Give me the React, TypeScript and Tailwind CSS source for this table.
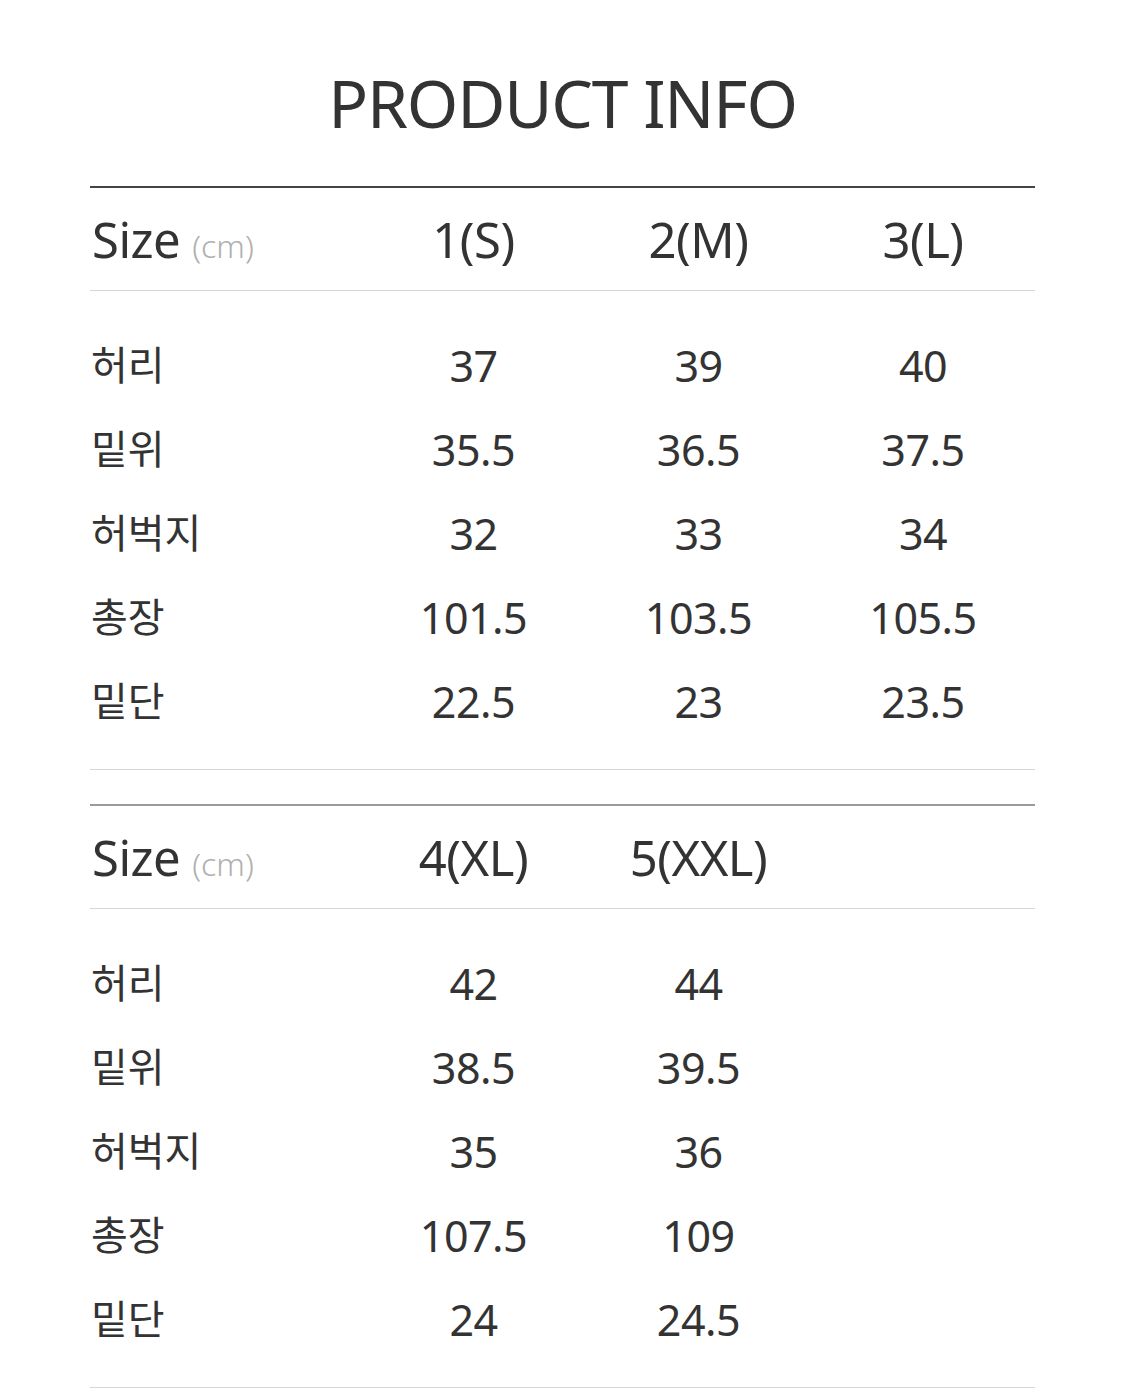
const font = { fontFamily: '"Noto Sans", "Noto Sans CJK KR", sans-serif' };

type SizeTable = {
  sizes: string[];
  rows: { label: string; values: string[] }[];
};

const tables: SizeTable[] = [
  {
    sizes: ["1(S)", "2(M)", "3(L)"],
    rows: [
      { label: "허리", values: ["37", "39", "40"] },
      { label: "밑위", values: ["35.5", "36.5", "37.5"] },
      { label: "허벅지", values: ["32", "33", "34"] },
      { label: "총장", values: ["101.5", "103.5", "105.5"] },
      { label: "밑단", values: ["22.5", "23", "23.5"] },
    ],
  },
  {
    sizes: ["4(XL)", "5(XXL)"],
    rows: [
      { label: "허리", values: ["42", "44"] },
      { label: "밑위", values: ["38.5", "39.5"] },
      { label: "허벅지", values: ["35", "36"] },
      { label: "총장", values: ["107.5", "109"] },
      { label: "밑단", values: ["24", "24.5"] },
    ],
  },
];

const SizeBlock = ({ table, first }: { table: SizeTable; first: boolean }) => (
  <div
    className={`border-t-2 ${first ? "border-[#444444]" : "border-[#9a9a9a]"} border-b border-b-[#d6d6d6]`}
  >
    <div className="grid grid-cols-[271px_225px_225px_1fr] items-center h-[103px] border-b border-[#d6d6d6]">
      <div className="flex items-baseline pl-[2px]">
        <span className="text-[49px] leading-none tracking-[-0.5px]">Size</span>
        <span className="ml-[12px] text-[32px] leading-none text-[#b0b0b0] font-light">(cm)</span>
      </div>
      {table.sizes.map((s) => (
        <div key={s} className="text-center text-[49px] leading-none tracking-[-0.5px]">
          {s}
        </div>
      ))}
    </div>
    <div className="pt-[32px] pb-[26px]">
      {table.rows.map((r) => (
        <div
          key={r.label}
          className="grid grid-cols-[271px_225px_225px_1fr] items-center h-[84px]"
        >
          <div className="pl-[1px] text-[40px] leading-none">{r.label}</div>
          {r.values.map((v, i) => (
            <div key={i} className="text-center text-[43px] leading-none tracking-[-0.5px]">
              {v}
            </div>
          ))}
        </div>
      ))}
    </div>
  </div>
);

export default function App() {
  return (
    <div className="w-[1125px] h-[1395px] bg-white text-[#333333] overflow-hidden" style={font}>
      <div className="pt-[69px]">
        <h1 className="h-[67px] text-center text-[66px] leading-none font-normal tracking-[-1.2px]">
          PRODUCT INFO
        </h1>
      </div>
      <div className="mx-[90px] mt-[50px] flex flex-col gap-[34px]">
        {tables.map((t, i) => (
          <SizeBlock key={i} table={t} first={i === 0} />
        ))}
      </div>
    </div>
  );
}
